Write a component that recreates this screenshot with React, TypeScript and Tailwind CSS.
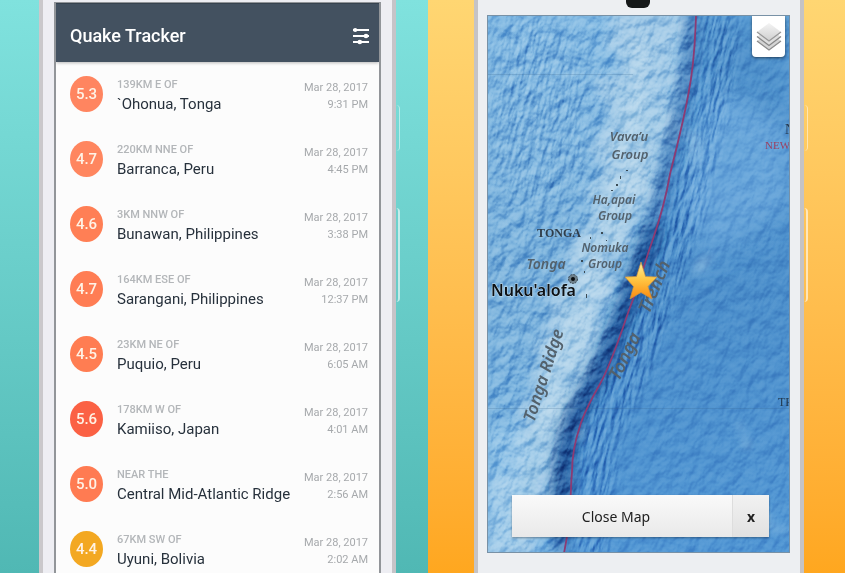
import React from "react";

type Quake = {
  magnitude: string;
  distance: string;
  place: string;
  time: string;
  tone: string;
};

const quakes: Quake[] = [
  { magnitude: "5.3", distance: "139KM E OF", place: "`Ohonua, Tonga", time: "9:31 PM", tone: "bg-[#ff8560]" },
  { magnitude: "4.7", distance: "220KM NNE OF", place: "Barranca, Peru", time: "4:45 PM", tone: "bg-[#ff865f]" },
  { magnitude: "4.6", distance: "3KM NNW OF", place: "Bunawan, Philippines", time: "3:38 PM", tone: "bg-[#ff7f55]" },
  { magnitude: "4.7", distance: "164KM ESE OF", place: "Sarangani, Philippines", time: "12:37 PM", tone: "bg-[#ff7d54]" },
  { magnitude: "4.5", distance: "23KM NE OF", place: "Puquio, Peru", time: "6:05 AM", tone: "bg-[#ff7d52]" },
  { magnitude: "5.6", distance: "178KM W OF", place: "Kamiiso, Japan", time: "4:01 AM", tone: "bg-[#fb6144]" },
  { magnitude: "5.0", distance: "NEAR THE", place: "Central Mid-Atlantic Ridge", time: "2:56 AM", tone: "bg-[#ff7b52]" },
  { magnitude: "4.4", distance: "67KM SW OF", place: "Uyuni, Bolivia", time: "2:02 AM", tone: "bg-[#f3a822]" },
];

function FilterIcon() {
  return (
    <svg viewBox="0 0 18 18" className="h-[18px] w-[18px]" fill="white" aria-hidden="true">
      <path d="M1 3H17M1 9H17M1 15H17" stroke="white" strokeWidth="2" fill="none" />
      <circle cx="3.2" cy="3" r="2.1" />
      <circle cx="14" cy="9" r="2.3" />
      <circle cx="7.8" cy="15" r="2.3" />
    </svg>
  );
}

function LayersIcon() {
  return (
    <svg viewBox="0 0 26 30" className="h-[30px] w-[26px]" aria-hidden="true">
      <defs>
        <linearGradient id="sheet" x1="0" y1="0" x2="0" y2="1">
          <stop offset="0" stopColor="#f4f4f4" />
          <stop offset="1" stopColor="#cfcfcf" />
        </linearGradient>
      </defs>
      <path d="M1 19L13 10L25 19L13 28Z" fill="#d4d4d4" />
      <path d="M1 19L13 28L25 19" fill="none" stroke="#8c8c8c" strokeWidth="1.3" />
      <path d="M1 14.500L13 5.500L25 14.500L13 23.500Z" fill="#dedede" stroke="#fff" strokeWidth=".6" />
      <path d="M1 14.500L13 23.500L25 14.500" fill="none" stroke="#858585" strokeWidth="1.3" />
      <path d="M1 10L13 1L25 10L13 19Z" fill="url(#sheet)" />
      <path d="M1 10L13 19L25 10" fill="none" stroke="#999" strokeWidth="1.3" />
    </svg>
  );
}

function QuakeRow({ quake }: { quake: Quake }) {
  return (
    <li className="flex h-16 items-center pr-[11px] pl-[14px]">
      <span className={`flex h-9 w-[33px] shrink-0 items-center justify-center rounded-[50%] text-[15px] font-medium text-[#fff3e6] ${quake.tone}`}>
        {quake.magnitude}
      </span>
      <div className="ml-[14px] min-w-0 flex-1 pt-1 whitespace-nowrap">
        <p className="text-[11px] leading-4 font-medium text-[#b3b6b9]">{quake.distance}</p>
        <p className="text-[15px] leading-[22px] text-[#27313c]">{quake.place}</p>
      </div>
      <p className="shrink-0 pt-1 text-right text-[11px] leading-[17px] text-[#a6a9ac]">
        Mar 28, 2017
        <br />
        {quake.time}
      </p>
    </li>
  );
}

const TRENCH =
  "M208 0C207 22 207 46 200 80C194 112 187 138 182 158C178 182 173 200 164 226C156 248 150 272 141 294C132 320 124 346 112 368C104 382 96 396 92 410C86 428 84 440 84 456C82 474 84 500 76 537";

function ReliefMap() {
  return (
    <svg viewBox="0 0 301 536" preserveAspectRatio="xMidYMid slice" className="absolute inset-0 h-full w-full" role="img" aria-label="Sea floor around Tonga">
      <defs>
        <linearGradient id="east" x1="0" y1="0" x2="0" y2="1">
          <stop offset="0" stopColor="#5c9fd6" />
          <stop offset="0.5" stopColor="#4c8fcb" />
          <stop offset="1" stopColor="#5297d4" />
        </linearGradient>
        <linearGradient id="west" x1="0" y1="0" x2="0" y2="1">
          <stop offset="0" stopColor="#82b9e2" />
          <stop offset="0.5" stopColor="#7bb2dc" />
          <stop offset="1" stopColor="#76b2e0" />
        </linearGradient>
        <filter id="soft6" x="-40%" y="-10%" width="180%" height="120%"><feGaussianBlur stdDeviation="6" /></filter>
        <filter id="soft12" x="-50%" y="-20%" width="200%" height="140%"><feGaussianBlur stdDeviation="12" /></filter>
        <filter id="fine" x="0" y="0" width="100%" height="100%" colorInterpolationFilters="sRGB">
          <feTurbulence type="fractalNoise" baseFrequency="0.085 0.055" numOctaves="5" seed="8" />
          <feColorMatrix values="0 0 0 0 0 0 0 0 0 0 0 0 0 0 0 1 0 0 0 0" />
          <feDiffuseLighting surfaceScale="5" diffuseConstant="0.75" lightingColor="#fff">
            <feDistantLight azimuth="225" elevation="42" />
          </feDiffuseLighting>
        </filter>
        <filter id="grooves" x="0" y="0" width="100%" height="100%" colorInterpolationFilters="sRGB">
          <feTurbulence type="fractalNoise" baseFrequency="0.22 0.045" numOctaves="3" seed="3" />
          <feColorMatrix values="0 0 0 0 0 0 0 0 0 0 0 0 0 0 0 1 0 0 0 0" />
          <feDiffuseLighting surfaceScale="3" diffuseConstant="0.75" lightingColor="#fff">
            <feDistantLight azimuth="200" elevation="42" />
          </feDiffuseLighting>
        </filter>
        <filter id="broken" x="-40%" y="-10%" width="180%" height="120%">
          <feTurbulence type="fractalNoise" baseFrequency="0.035" numOctaves="4" seed="5" result="n" />
          <feDisplacementMap in="SourceGraphic" in2="n" scale="48" xChannelSelector="R" yChannelSelector="G" result="d" />
          <feGaussianBlur in="d" stdDeviation="4" />
        </filter>
        <mask id="westArea"><rect width="301" height="536" fill="#666" /><path d={`${TRENCH}H0V0Z`} fill="#fff" filter="url(#soft6)" /></mask>
        <mask id="grooveArea">
          <path d={TRENCH} transform="translate(24 0)" fill="none" stroke="#ddd" strokeWidth="36" filter="url(#soft6)" />
          <ellipse cx="50" cy="95" rx="48" ry="95" fill="#999" filter="url(#soft12)" />
        </mask>
        <linearGradient id="star" x1="0" y1="0" x2="0" y2="1">
          <stop offset="0" stopColor="#fff0a0" />
          <stop offset="0.45" stopColor="#ffc845" />
          <stop offset="1" stopColor="#fb8a10" />
        </linearGradient>
      </defs>

      <rect width="301" height="536" fill="url(#east)" />
      <path d="M212 0H301V130L255 90L215 75Z" fill="#4789c5" opacity=".55" filter="url(#soft12)" />
      <path d="M226 70L301 110V190L225 240L190 190Z" fill="#73aee0" opacity=".65" filter="url(#soft12)" />
      <path d={`${TRENCH}H0V0Z`} fill="url(#west)" />
      <path d="M120 -10H190C200 80 164 180 140 226C118 292 96 370 78 430C66 500 56 520 36 546H-10C8 480 28 426 40 376C54 306 84 240 94 180C116 110 124 60 120 -10Z" fill="#a9cee8" opacity=".75" filter="url(#broken)" />
      <path d="M155 20C153 100 140 170 116 230C94 300 66 350 56 420" fill="none" stroke="#bfdcee" strokeWidth="22" opacity=".5" filter="url(#broken)" />
      <path d="M0 410L26 400L46 440L20 536H0Z" fill="#a6d0ed" opacity=".5" filter="url(#broken)" />
      <path d={TRENCH} fill="none" stroke="#2564a9" strokeWidth="13" opacity=".75" transform="translate(-4 0)" filter="url(#soft6)" />
      <path d="M174 210C158 250 147 290 135 314C116 364 92 390 86 420C80 444 79 460 79 490" fill="none" stroke="#144f95" strokeWidth="17" opacity=".85" transform="translate(-6 0)" filter="url(#soft6)" />

      <g mask="url(#westArea)" style={{ mixBlendMode: "soft-light" }}>
        <g transform="rotate(24 150 268)"><rect x="-180" y="-100" width="660" height="740" filter="url(#fine)" opacity=".95" /></g>
      </g>
      <g mask="url(#grooveArea)" style={{ mixBlendMode: "soft-light" }}>
        <g transform="rotate(14 150 268)"><rect x="-120" y="-60" width="540" height="660" filter="url(#grooves)" /></g>
      </g>

      <g fill="#b9ddf1" filter="url(#broken)" opacity=".6">
        <circle cx="206" cy="128" r="12" opacity=".7" />
        <circle cx="208" cy="247" r="6" />
        <ellipse cx="260" cy="428" rx="6" ry="12" />
        <ellipse cx="290" cy="506" rx="5" ry="14" opacity=".6" />
      </g>
      <path d="M0 58.500H145M0 392.500H301" stroke="#39658f" strokeWidth="1" opacity=".22" />
      <path d={TRENCH} fill="none" stroke="#8c3b73" strokeWidth="1.8" />

      <g className="font-['Noto_Sans',sans-serif] font-semibold italic" fill="#53616c" textAnchor="middle">
        <text x="141" y="125" className="text-[13px]">Vava’u</text>
        <text x="142" y="143" className="text-[13px]">Group</text>
        <text x="126" y="188" className="text-[12px]">Ha‚apai</text>
        <text x="127" y="204" className="text-[12px]">Group</text>
        <text x="117" y="236" className="text-[12px]">Nomuka</text>
        <text x="117" y="252" className="text-[12px]">Group</text>
        <text x="58" y="253" className="text-[14px]">Tonga</text>
        <text transform="translate(61 361) rotate(-72)" className="text-[17px]">Tonga Ridge</text>
        <text transform="translate(142 343) rotate(-64)" className="text-[18px]">Tonga</text>
        <text transform="translate(172 273) rotate(-67)" className="text-[18px]">Trench</text>
      </g>
      <text x="71" y="221" textAnchor="middle" className="font-['Liberation_Serif',serif] text-[12px] font-bold" fill="#303d4a">TONGA</text>
      <text x="277" y="133" className="font-['Liberation_Serif',serif] text-[11px]" fill="#9b4162">NEW</text>
      <text x="297" y="118" className="font-['Liberation_Serif',serif] text-[14px]" fill="#24364b">N</text>
      <text x="290" y="390" className="font-['Liberation_Serif',serif] text-[12px]" fill="#21384e">TR</text>
      <text x="3" y="280" className="font-['Noto_Sans',sans-serif] text-[16px] font-semibold" fill="#0c1014" stroke="#c5dff0" strokeWidth="1" paintOrder="stroke">Nuku'alofa</text>
      <g fill="#3b4b55">
        <circle cx="85" cy="263" r="4.500" fill="#6d7f8a" stroke="#394854" strokeDasharray="2 1" />
        <circle cx="85" cy="263" r="2" fill="#080b0d" />
        <path d="M128 168h2v2h-2zM132 160h1v3h-1zM123 174h2v1h-2zM113 216h2v2h-2zM118 224h1v1h-1zM102 221h1v2h-1zM93 244h2v2h-2zM96 255h1v2h-1zM98 278h1v4h-1zM138 154h2v1h-2z" />
      </g>
      <path d="M153 246L157.500 260.500L169 261L160 270.500L164 283L153 276.500L142 283L145.500 270.500L137 261L148.500 260.500Z" fill="url(#star)" stroke="#ca9145" strokeWidth=".7" strokeLinejoin="round" />
    </svg>
  );
}

function SideKeys() {
  return (
    <>
      <span className="absolute top-[105px] -right-2 h-[46px] w-1 rounded-r-sm border-r border-white/50" />
      <span className="absolute top-[208px] -right-2 h-[94px] w-1 rounded-r-sm border-r-2 border-white/60" />
    </>
  );
}

export default function App() {
  return (
    <main className="grid h-screen grid-cols-[428fr_417fr] overflow-hidden font-[Roboto,sans-serif]">
      <section className="h-full min-h-0 bg-linear-to-b from-[#80e2de] to-[#50b8b4] pr-8 pl-[39px]">
        <div className="relative h-full border-x-4 border-[#c6c4c8] border-l-[#cac8cb] bg-[#eeeef3] px-[11px] pt-[2px]">
          <SideKeys />
          <div className="h-full overflow-hidden border-x-2 border-t border-[#929599] bg-[#fcfcfc]">
            <header className="flex h-[59px] items-center justify-between border-t border-[#37434f] bg-[#435160] pt-[5px] pr-[9px] pl-[14px] shadow-[0_1px_3px_#0004]">
              <h1 className="text-[18px] leading-6 font-medium text-white">Quake Tracker</h1>
              <button type="button" aria-label="Filter earthquakes"><FilterIcon /></button>
            </header>
            <ul className="flex flex-col gap-px">
              {quakes.map((quake) => <QuakeRow key={quake.place} quake={quake} />)}
            </ul>
          </div>
        </div>
      </section>

      <section className="h-full min-h-0 bg-linear-to-b from-[#ffd672] to-[#ffa71f] pr-[41px] pl-[46px]">
        <div className="relative h-full border-x-4 border-[#c5c3c5] bg-[#edeff2] pt-[15px] pr-[10px] pb-5 pl-[9px]">
          <SideKeys />
          <span className="absolute -top-2 left-[148px] h-4 w-6 rounded-md bg-[#151819]" />
          <div className="relative h-full overflow-hidden border border-[#7891a6]">
            <ReliefMap />
            <button type="button" aria-label="Map layers" className="absolute top-0 right-1 flex h-[41px] w-[33px] items-center justify-center rounded-b-sm bg-white shadow-[0_1px_3px_#0008]">
              <LayersIcon />
            </button>
            <div className="absolute right-5 bottom-[15px] left-6 flex h-[42px] bg-linear-to-b from-[#fafafa] to-[#e9e9e9] font-['Noto_Sans',sans-serif] text-[#202020] shadow-[0_1px_2px_#0005]">
              <button type="button" className="flex-1 pr-3 text-[14px]">Close Map</button>
              <button type="button" aria-label="Close" className="w-[37px] border-l border-[#ddd] bg-black/3 text-[14px] font-bold">x</button>
            </div>
          </div>
        </div>
      </section>
    </main>
  );
}
